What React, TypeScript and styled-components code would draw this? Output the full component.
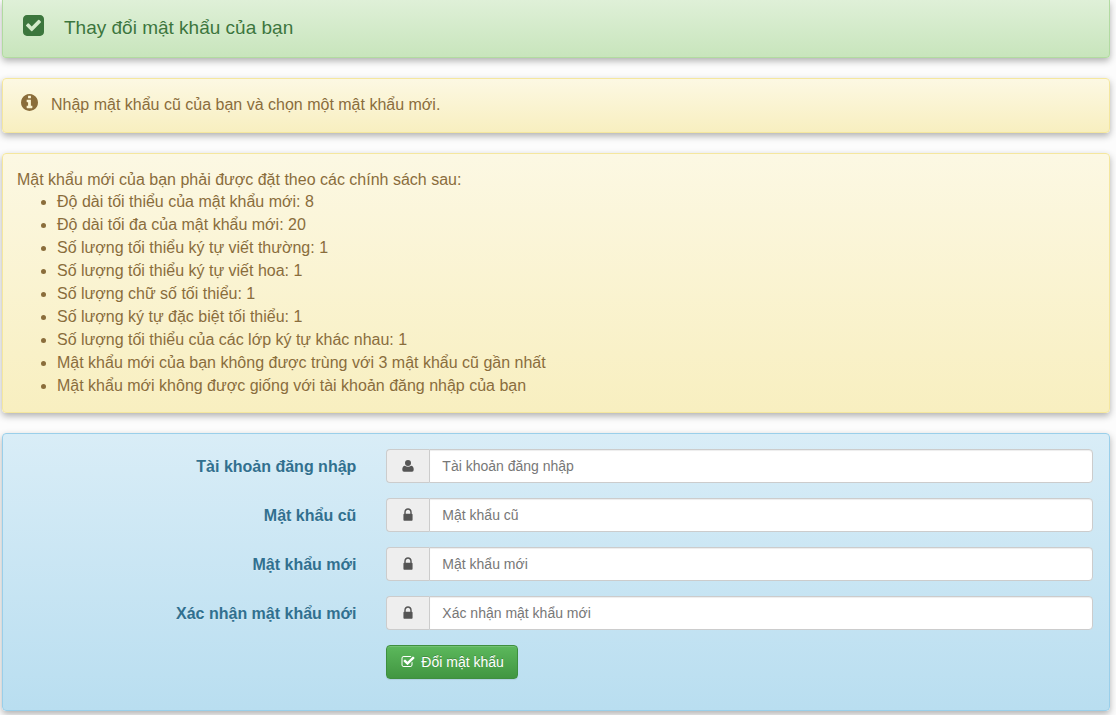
import React from "react";
import styled, { createGlobalStyle, css } from "styled-components";

const GlobalStyle = createGlobalStyle`
  *, *::before, *::after { box-sizing: border-box; }
  body {
    margin: 0;
    background: #fcfcfc;
    font-family: "Liberation Sans", Arial, Helvetica, sans-serif;
    font-size: 16px;
    line-height: 23px;
  }
`;

const tones = {
  success: { from: "#dff0d8", to: "#c8e5bc", border: "#b2dba1", text: "#3c763d" },
  warning: { from: "#fcf8e3", to: "#f8efc0", border: "#f5e79e", text: "#8a6d3b" },
  info: { from: "#d9edf7", to: "#b9def0", border: "#9acfea", text: "#31708f" },
};

type Tone = keyof typeof tones;

const Page = styled.main`
  display: flex;
  flex-direction: column;
  gap: 20px;
  padding: 0 6px 4px 2px;
`;

const panel = css<{ $tone: Tone }>`
  border: 1px solid ${(p) => tones[p.$tone].border};
  border-radius: 4px;
  background: linear-gradient(to bottom, ${(p) => tones[p.$tone].from}, ${(p) => tones[p.$tone].to});
  color: ${(p) => tones[p.$tone].text};
  text-shadow: 0 1px 0 rgba(255, 255, 255, 0.2);
  box-shadow: 0 3px 7px rgba(0, 0, 0, 0.3);
`;

const TitlePanel = styled.header<{ $tone: Tone }>`
  ${panel}
  display: flex;
  align-items: flex-start;
  gap: 20px;
  padding: 15px 20px 17px;
  border-top: 0;
  border-top-left-radius: 0;
  border-top-right-radius: 0;
`;

const Title = styled.h1`
  margin: 0;
  font-size: 19px;
  font-weight: 400;
  line-height: 25px;
`;

const Message = styled.section<{ $tone: Tone }>`
  ${panel}
  display: flex;
  align-items: flex-start;
  gap: 13px;
  padding: 15px 18px 17px;
`;

const Text = styled.p`
  margin: 0;
  line-height: 21px;
`;

const Policy = styled.section<{ $tone: Tone }>`
  ${panel}
  padding: 16px 14px 15px;
`;

const PolicyIntro = styled.p`
  margin: 0;
  line-height: 20px;
`;

const PolicyList = styled.ul`
  margin: 0;
  padding-left: 40px;
`;

const Form = styled.form<{ $tone: Tone }>`
  ${panel}
  display: flex;
  flex-direction: column;
  gap: 15px;
  padding: 15px 1px 31px 0;
`;

const Row = styled.div`
  display: grid;
  grid-template-columns: 1fr 2fr;
`;

const Label = styled.label`
  padding: 6px 15px 5px;
  font-weight: 700;
  text-align: right;
`;

const Field = styled.div`
  display: flex;
  grid-column: 2;
  padding: 0 15px;
`;

const Addon = styled.span`
  display: flex;
  align-items: center;
  justify-content: center;
  width: 43px;
  height: 34px;
  border: 1px solid #ccc;
  border-right: 0;
  border-radius: 4px 0 0 4px;
  background: #eee;
  color: #555;
`;

const Input = styled.input`
  flex: 1;
  min-width: 0;
  height: 34px;
  padding: 6px 12px;
  border: 1px solid #ccc;
  border-radius: 0 4px 4px 0;
  background: #fff;
  box-shadow: inset 0 1px 1px rgba(0, 0, 0, 0.075);
  color: #555;
  font-family: inherit;
  font-size: 14px;
  line-height: 20px;

  &::placeholder {
    color: #777;
    opacity: 1;
  }
`;

const SubmitButton = styled.button`
  display: flex;
  align-items: center;
  gap: 6px;
  height: 34px;
  padding: 0 13px 0 14px;
  border: 1px solid #3e8f3e;
  border-radius: 4px;
  background: linear-gradient(to bottom, #5cb85c, #419641);
  box-shadow: inset 0 1px 0 rgba(255, 255, 255, 0.15), 0 1px 1px rgba(0, 0, 0, 0.075);
  color: #fff;
  font-family: inherit;
  font-size: 14px;
  line-height: 20px;
  text-shadow: 0 -1px 0 rgba(0, 0, 0, 0.2);
  cursor: pointer;
`;

const Glyph = styled.svg<{ $size: number }>`
  flex: none;
  width: ${(p) => p.$size}px;
  height: ${(p) => p.$size}px;
  fill: currentColor;
`;

const glyphs = {
  checkSquare: {
    box: "128 128 1536 1536",
    d: "M813 1299l614-614q19-19 19-45t-19-45l-102-102q-19-19-45-19t-45 19l-467 467-211-211q-19-19-45-19t-45 19l-102 102q-19 19-19 45t19 45l358 358q19 19 45 19t45-19zm851-883v960q0 119-84.5 203.5t-203.5 84.5h-960q-119 0-203.5-84.5t-84.5-203.5v-960q0-119 84.5-203.5t203.5-84.5h960q119 0 203.5 84.5t84.5 203.5z",
  },
  info: {
    box: "128 128 1536 1536",
    d: "M1152 1376v-160q0-14-9-23t-23-9h-96v-512q0-14-9-23t-23-9h-320q-14 0-23 9t-9 23v160q0 14 9 23t23 9h96v320h-96q-14 0-23 9t-9 23v160q0 14 9 23t23 9h448q14 0 23-9t9-23zm-128-896v-160q0-14-9-23t-23-9h-192q-14 0-23 9t-9 23v160q0 14 9 23t23 9h192q14 0 23-9t9-23zm640 416q0 209-103 385.5t-279.5 279.5-385.5 103-385.5-103-279.5-279.5-103-385.5 103-385.5 279.5-279.5 385.5-103 385.5 103 279.5 279.5 103 385.5z",
  },
  user: {
    box: "0 0 1792 1792",
    d: "M896 224a336 336 0 0 1 336 336a336 336 0 0 1-672 0a336 336 0 0 1 336-336zM256 1310q0-390 290-430 150 100 350 100t350-100q290 40 290 430 0 230-190 230h-900q-190 0-190-230z",
  },
  lock: {
    box: "0 0 1792 1792",
    d: "M640 768h512v-192q0-106-75-181t-181-75-181 75-75 181v192zm768 96v576q0 40-28 68t-68 28h-832q-40 0-68-28t-28-68v-576q0-40 28-68t68-28v-192q0-184 120-316t296-132 296 132 120 316v192q40 0 68 28t28 68z",
  },
  checkOutline: {
    box: "0 0 1792 1792",
    d: "M1472 930v318q0 119-84.5 203.5t-203.5 84.5h-832q-119 0-203.5-84.5t-84.5-203.5v-832q0-119 84.5-203.5t203.5-84.5h832q63 0 117 25 15 7 18 23 3 17-9 29l-49 49q-10 10-23 10-3 0-9-2-23-6-45-6h-832q-66 0-113 47t-47 113v832q0 66 47 113t113 47h832q66 0 113-47t47-113v-254q0-13 9-22l64-64q10-10 23-10 6 0 12 3 20 8 20 29zm231-489l-814 814q-24 24-57 24t-57-24l-430-430q-24-24-24-57t24-57l110-110q24-24 57-24t57 24l263 263 647-647q24-24 57-24t57 24l110 110q24 24 24 57t-24 57z",
  },
};

function Icon({ name, size }: { name: keyof typeof glyphs; size: number }) {
  return (
    <Glyph $size={size} viewBox={glyphs[name].box} aria-hidden="true">
      <path d={glyphs[name].d} />
    </Glyph>
  );
}

const policies = [
  "Độ dài tối thiểu của mật khẩu mới: 8",
  "Độ dài tối đa của mật khẩu mới: 20",
  "Số lượng tối thiểu ký tự viết thường: 1",
  "Số lượng tối thiểu ký tự viết hoa: 1",
  "Số lượng chữ số tối thiểu: 1",
  "Số lượng ký tự đặc biệt tối thiểu: 1",
  "Số lượng tối thiểu của các lớp ký tự khác nhau: 1",
  "Mật khẩu mới của bạn không được trùng với 3 mật khẩu cũ gần nhất",
  "Mật khẩu mới không được giống với tài khoản đăng nhập của bạn",
];

const fields: { id: string; label: string; icon: "user" | "lock"; type: string }[] = [
  { id: "login", label: "Tài khoản đăng nhập", icon: "user", type: "text" },
  { id: "oldpassword", label: "Mật khẩu cũ", icon: "lock", type: "password" },
  { id: "newpassword", label: "Mật khẩu mới", icon: "lock", type: "password" },
  { id: "confirmpassword", label: "Xác nhận mật khẩu mới", icon: "lock", type: "password" },
];

export default function App() {
  return (
    <>
      <GlobalStyle />
      <Page>
        <TitlePanel $tone="success">
          <Icon name="checkSquare" size={21} />
          <Title>Thay đổi mật khẩu của bạn</Title>
        </TitlePanel>
        <Message $tone="warning">
          <Icon name="info" size={17} />
          <Text>Nhập mật khẩu cũ của bạn và chọn một mật khẩu mới.</Text>
        </Message>
        <Policy $tone="warning">
          <PolicyIntro>Mật khẩu mới của bạn phải được đặt theo các chính sách sau:</PolicyIntro>
          <PolicyList>
            {policies.map((policy) => (
              <li key={policy}>{policy}</li>
            ))}
          </PolicyList>
        </Policy>
        <Form $tone="info" onSubmit={(event) => event.preventDefault()}>
          {fields.map((field) => (
            <Row key={field.id}>
              <Label htmlFor={field.id}>{field.label}</Label>
              <Field>
                <Addon>
                  <Icon name={field.icon} size={16} />
                </Addon>
                <Input id={field.id} name={field.id} type={field.type} placeholder={field.label} />
              </Field>
            </Row>
          ))}
          <Row>
            <Field>
              <SubmitButton type="submit">
                <Icon name="checkOutline" size={14} />
                Đổi mật khẩu
              </SubmitButton>
            </Field>
          </Row>
        </Form>
      </Page>
    </>
  );
}
